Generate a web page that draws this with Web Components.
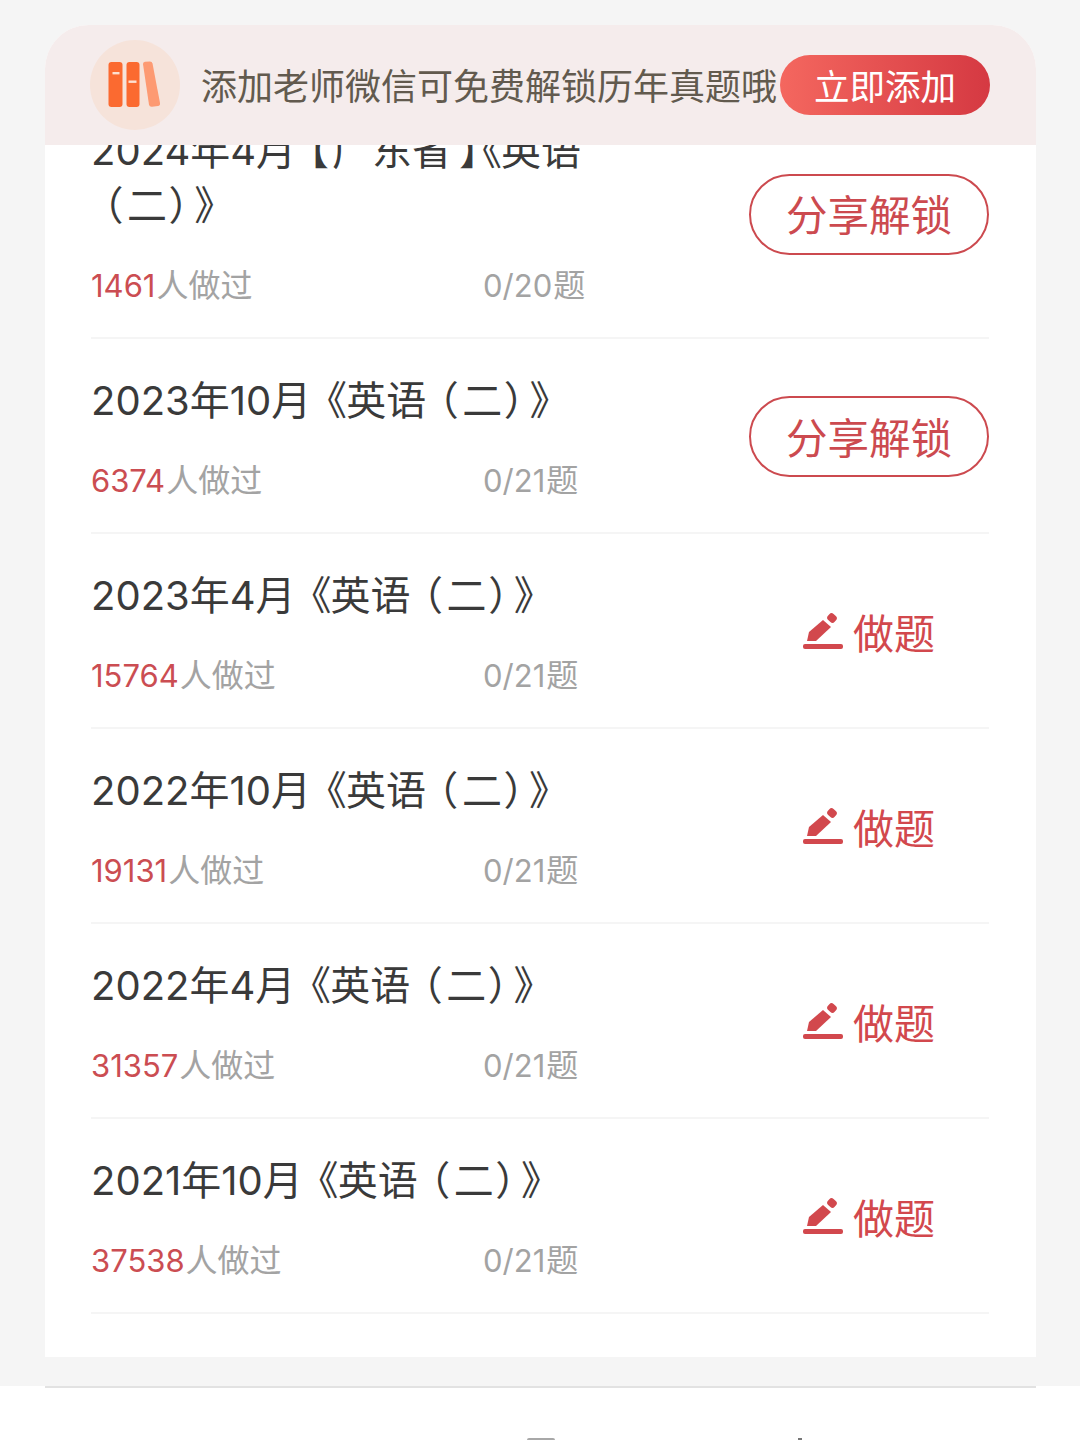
<!DOCTYPE html>
<html lang="zh"><head><meta charset="utf-8"><title>真题</title>
<style>
html,body{margin:0;padding:0;background:#fff}
body{width:1080px;height:1440px;overflow:hidden;font-family:"Noto Sans CJK SC","Noto Sans",sans-serif}
</style></head><body>
<exam-screen>
  <wechat-banner text="添加老师微信可免费解锁历年真题哦" action="立即添加"></wechat-banner>
  <exam-row title-text="2024年4月【广东省】《英语（二）》" count="1461" progress="0/20" mode="share"></exam-row>
  <exam-row title-text="2023年10月《英语（二）》" count="6374" progress="0/21" mode="share"></exam-row>
  <exam-row title-text="2023年4月《英语（二）》" count="15764" progress="0/21" mode="do"></exam-row>
  <exam-row title-text="2022年10月《英语（二）》" count="19131" progress="0/21" mode="do"></exam-row>
  <exam-row title-text="2022年4月《英语（二）》" count="31357" progress="0/21" mode="do"></exam-row>
  <exam-row title-text="2021年10月《英语（二）》" count="37538" progress="0/21" mode="do"></exam-row>
</exam-screen>
<script>
class ExamScreen extends HTMLElement{
  constructor(){super();this.attachShadow({mode:'open'}).innerHTML=`<style>
  :host{display:block;width:1080px;height:1440px}
  .bg{height:1386px;background:#f5f5f5;padding:25px 44px 0 45px;box-sizing:border-box}
  .card{height:1332px;background:#fff;border-radius:44px 44px 0 0;overflow:hidden;position:relative;box-sizing:border-box;padding:64px 47px 0 46px}
  .top{position:absolute;left:0;right:0;top:0;z-index:2}
  .foot{height:54px;margin:0 44px 0 45px;border-top:2px solid #e2e2e2;box-sizing:border-box;display:flex;overflow:hidden;padding:50px 0 0 482px}
  .a{width:28px;height:4px;background:#a8a8a8;border-radius:2px 2px 0 0}
  .b{width:4px;height:4px;background:#777;margin-left:243px}
  </style><div class="bg"><div class="card"><div class="top"><slot name="top"></slot></div><slot></slot></div></div>
  <div class="foot"><i class="a"></i><i class="b"></i></div>`;}
  connectedCallback(){const b=this.querySelector('wechat-banner');if(b)b.slot='top';}
}
class WechatBanner extends HTMLElement{
  connectedCallback(){if(this.shadowRoot)return;this.attachShadow({mode:'open'}).innerHTML=`<style>
  :host{display:flex;align-items:center;height:120px;background:#f5ecec;padding:0 46px 0 45px;box-sizing:border-box;font-family:"Noto Sans CJK SC",sans-serif}
  svg{width:90px;height:90px;flex:none;display:block}
  .t{margin-left:21px;font-size:36px;line-height:1;color:#625a4e;white-space:nowrap;position:relative;top:-1px}
  .b{margin-left:auto;width:210px;height:60px;border-radius:30px;background:linear-gradient(90deg,#f4675f,#d53942);color:#fff;font-size:35.500px;display:flex;align-items:center;justify-content:center;white-space:nowrap;line-height:1}
  </style>
  <svg viewBox="0 0 90 90"><circle cx="45" cy="45" r="45" fill="#f6e3da"/>
   <rect x="18.500" y="22" width="14" height="45" rx="3" fill="#fb6a30"/>
   <rect x="36.500" y="22" width="13" height="45" rx="3" fill="#fb6a30"/>
   <rect x="22.500" y="32" width="7" height="2.400" fill="#fde0d0"/>
   <rect x="38.500" y="40.500" width="8" height="2.400" fill="#fde0d0"/>
   <path d="M53 24q0-2 2-2.200l5-.3q2 0 2.500 2L70 63q.4 2.500-2 3l-6 .8q-2.500.2-3-2z" fill="#fd9a72"/></svg>
  <div class="t">${this.getAttribute('text')}</div><div class="b">${this.getAttribute('action')}</div>`;}
}
class ExamRow extends HTMLElement{
  connectedCallback(){if(this.shadowRoot)return;
  const share=this.getAttribute('mode')==='share';
  const title=this.getAttribute('title-text')
    .replace('《','<span class="ls">《</span>')
    .replace('（','<span class="po">（</span>')
    .replace('）','<span class="pc">）</span>')
    .replace('【','<span class="bo">【</span>')
    .replace('】','<span class="bc">】</span>');
  this.attachShadow({mode:'open'}).innerHTML=`<style>
  :host{display:flex;align-items:center;justify-content:space-between;border-bottom:2px solid #f5f5f5;padding:34px 0 32px;box-sizing:border-box;font-family:"Noto Sans CJK SC",sans-serif}
  .l{width:505px}
  h3{margin:0;font-weight:400;font-family:Inter,"Noto Sans CJK SC",sans-serif;font-size:40px;line-height:55px;color:#3a3a3a;font-feature-settings:"palt"}
  .ls{margin-left:15px}
  .bc + .ls{margin-left:3px}
  .po{margin-left:11px;margin-right:5px}
  .pc{margin-left:3px;margin-right:5px}
  .bo{margin-left:12px;margin-right:4px}
  .bc{margin-left:8px;margin-right:-2px}
  .m{display:flex;height:42px;margin-top:30px;font-size:32px;line-height:42px;color:#a3a3a3;white-space:nowrap;position:relative;top:-1px}
  .num{font-family:Inter,sans-serif;font-size:31px;line-height:1;margin-right:1px}
  .n{color:#cb4d52}.c{width:392px;flex:none}
  .s{width:236px;height:77px;border:2px solid #cc4a4f;border-radius:41px;color:#cc4a4f;font-size:41.500px;display:flex;align-items:center;justify-content:center;line-height:1;white-space:nowrap}
  .d{width:240px;display:flex;align-items:center;justify-content:center;color:#d2484d;font-size:41px;line-height:1;white-space:nowrap}
  .d svg{width:40px;height:40px;margin-right:10px;flex:none}
  </style><div class="l"><h3>${title}</h3>
  <div class="m"><span class="c"><span class="num n">${this.getAttribute('count')}</span>人做过</span><span><span class="num">${this.getAttribute('progress')}</span>题</span></div></div>
  ${share?`<div class="s">分享解锁</div>`:`<div class="d"><svg viewBox="0 0 40 40"><path d="M4 29l2-9 14-12 8 7-15 14z" fill="#d2484d"/><rect x="24.500" y="2" width="9" height="8" rx="3" transform="rotate(42 29 6)" fill="#d2484d"/><rect y="32" width="40" height="5" rx="2" fill="#d2484d"/></svg>做题</div>`}`;}
}
customElements.define('exam-row',ExamRow);
customElements.define('wechat-banner',WechatBanner);
customElements.define('exam-screen',ExamScreen);
</script>
</body></html>
